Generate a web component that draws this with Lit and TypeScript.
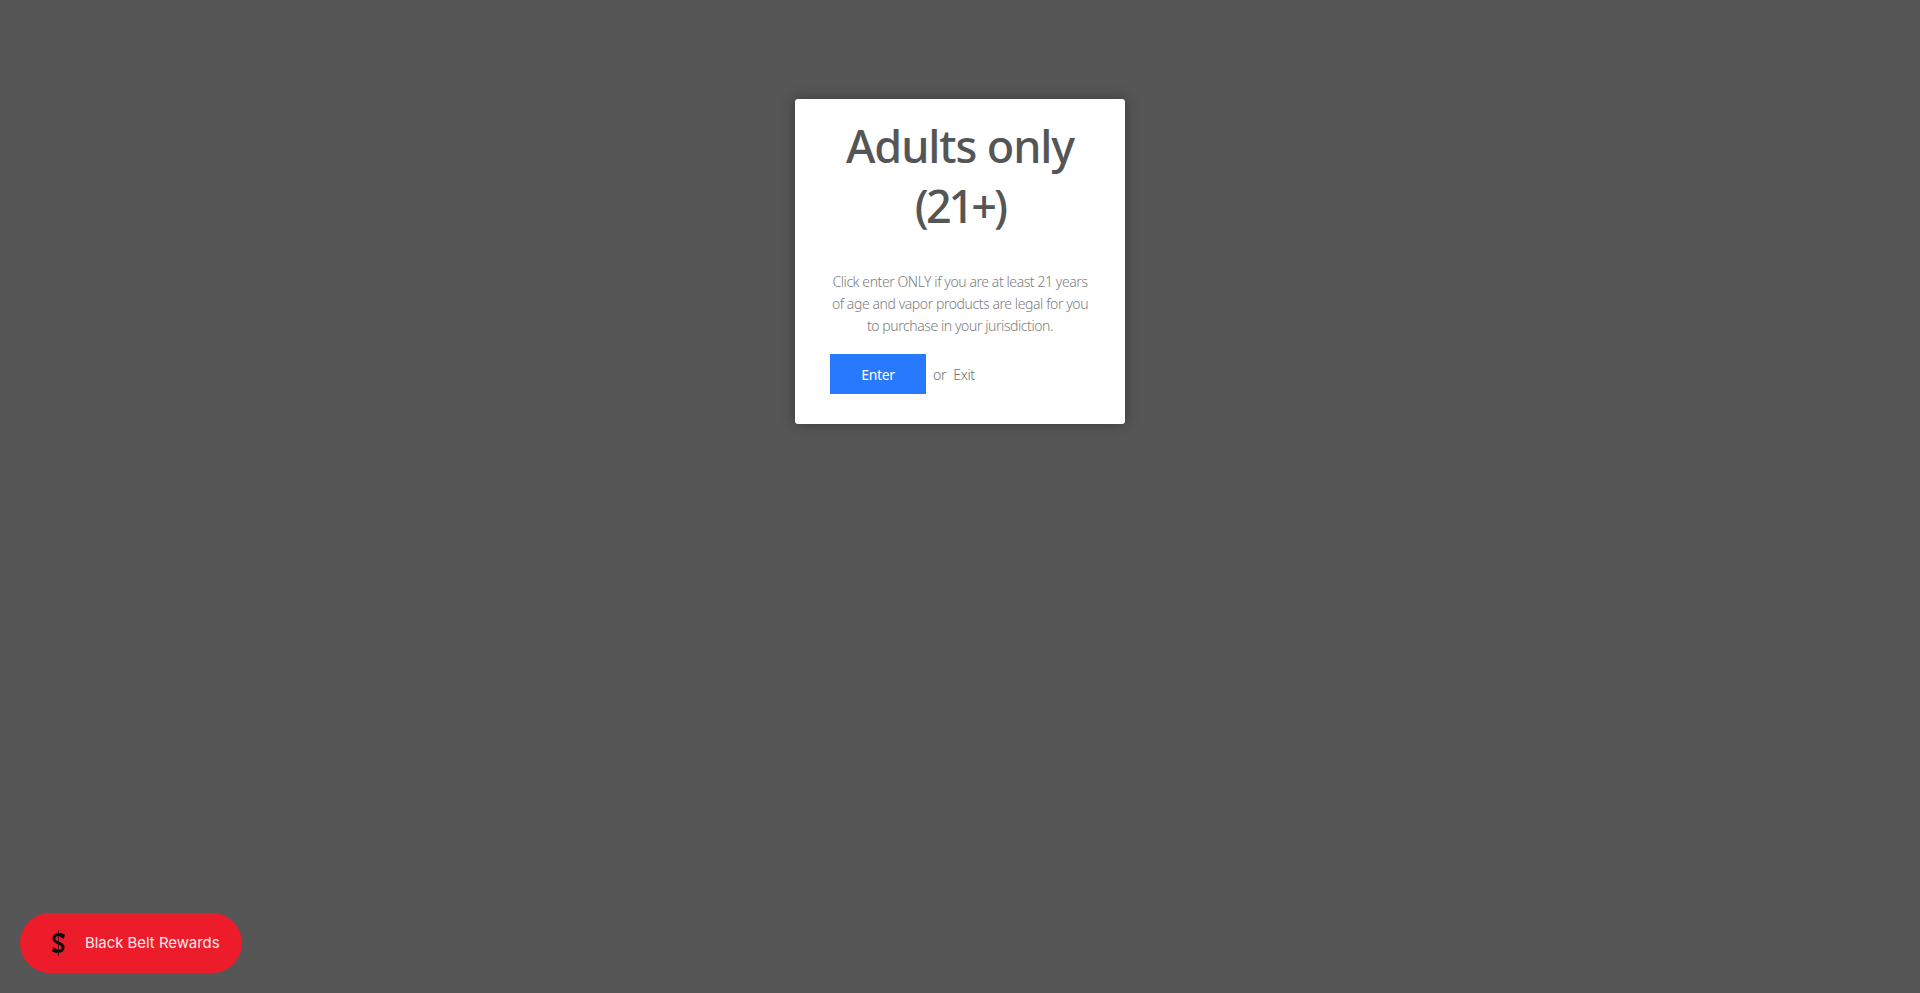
import { LitElement, html, css } from "lit";
import { customElement } from "lit/decorators.js";

@customElement("app-root")
export class AppRoot extends LitElement {
  static styles = css`
    :host { display: block; }
    .page {
      position: relative;
      height: 993px;
      background: #565656;
      display: flex;
      justify-content: center;
      align-items: flex-start;
      padding-top: 99px;
      box-sizing: border-box;
      overflow: hidden;
      font-family: "Noto Sans", "Open Sans", sans-serif;
    }
    .modal {
      width: 330px;
      height: 325px;
      box-sizing: border-box;
      background: #fff;
      border-radius: 3px;
      box-shadow: 0 0 14px rgba(0,0,0,.35);
      padding: 17px 35px 0;
      display: flex;
      flex-direction: column;
    }
    h1 {
      margin: 0;
      font-size: 45px;
      line-height: 60px;
      font-weight: 500;
      letter-spacing: -1.1px;
      color: #555555;
      text-align: center;
    }
    .tight { letter-spacing: -3px; }
    p {
      margin: 35px -5px 0;
      font-size: 14px;
      line-height: 22px;
      font-weight: 300;
      letter-spacing: -0.42px;
      color: #7d7d7d;
      text-align: center;
    }
    .actions {
      display: flex;
      align-items: center;
      margin-top: 17px;
      font-size: 14px;
      font-weight: 300;
      color: #707070;
      letter-spacing: -0.3px;
    }
    .enter {
      width: 96px;
      height: 40px;
      display: flex;
      align-items: center;
      justify-content: center;
      background: #2979ff;
      color: #fff;
      font-weight: 400;
      margin-right: 7px;
    }
    .exit { margin-left: 7px; }
    .rewards {
      position: absolute;
      left: 20px;
      top: 913px;
      width: 222px;
      height: 60px;
      border-radius: 30px;
      background: #ed1c2b;
      display: flex;
      align-items: center;
      box-sizing: border-box;
      padding-left: 27px;
      gap: 14px;
      color: #fde8ea;
      font-family: Inter, Roboto, sans-serif;
      font-size: 14.9px;
    }
    svg { width: 24px; height: 32px; flex: none; }
  `;
  render() {
    return html`<div class="page">
      <div class="modal">
        <h1>Adults only <span class="tight">(21+)</span></h1>
        <p>Click enter ONLY if you are at least 21 years of age and vapor products are legal for you to purchase in your jurisdiction.</p>
        <div class="actions"><span class="enter">Enter</span><span>or</span><span class="exit">Exit</span></div>
      </div>
      <div class="rewards">
        <svg viewBox="0 0 24 32" fill="none" stroke="#0b0b0b">
          <path d="M11.5 3V29" stroke-width="0.7"/>
          <path d="M15.5 10.5C14.5 7 8.5 6.5 7 10.5C6 14 9 15 11.5 16C14 17 17 18 16 21.5C14.5 25.5 8.5 25 7.5 21.5" stroke-width="2.8"/>
          <path d="M12.5 5.5L18 7.5L16.5 12.5Z" fill="#0b0b0b" stroke="none"/>
          <path d="M10.5 26.5L5 24.5L6.5 19.5Z" fill="#0b0b0b" stroke="none"/>
        </svg>
        <span>Black Belt Rewards</span>
      </div>
    </div>`;
  }
}
